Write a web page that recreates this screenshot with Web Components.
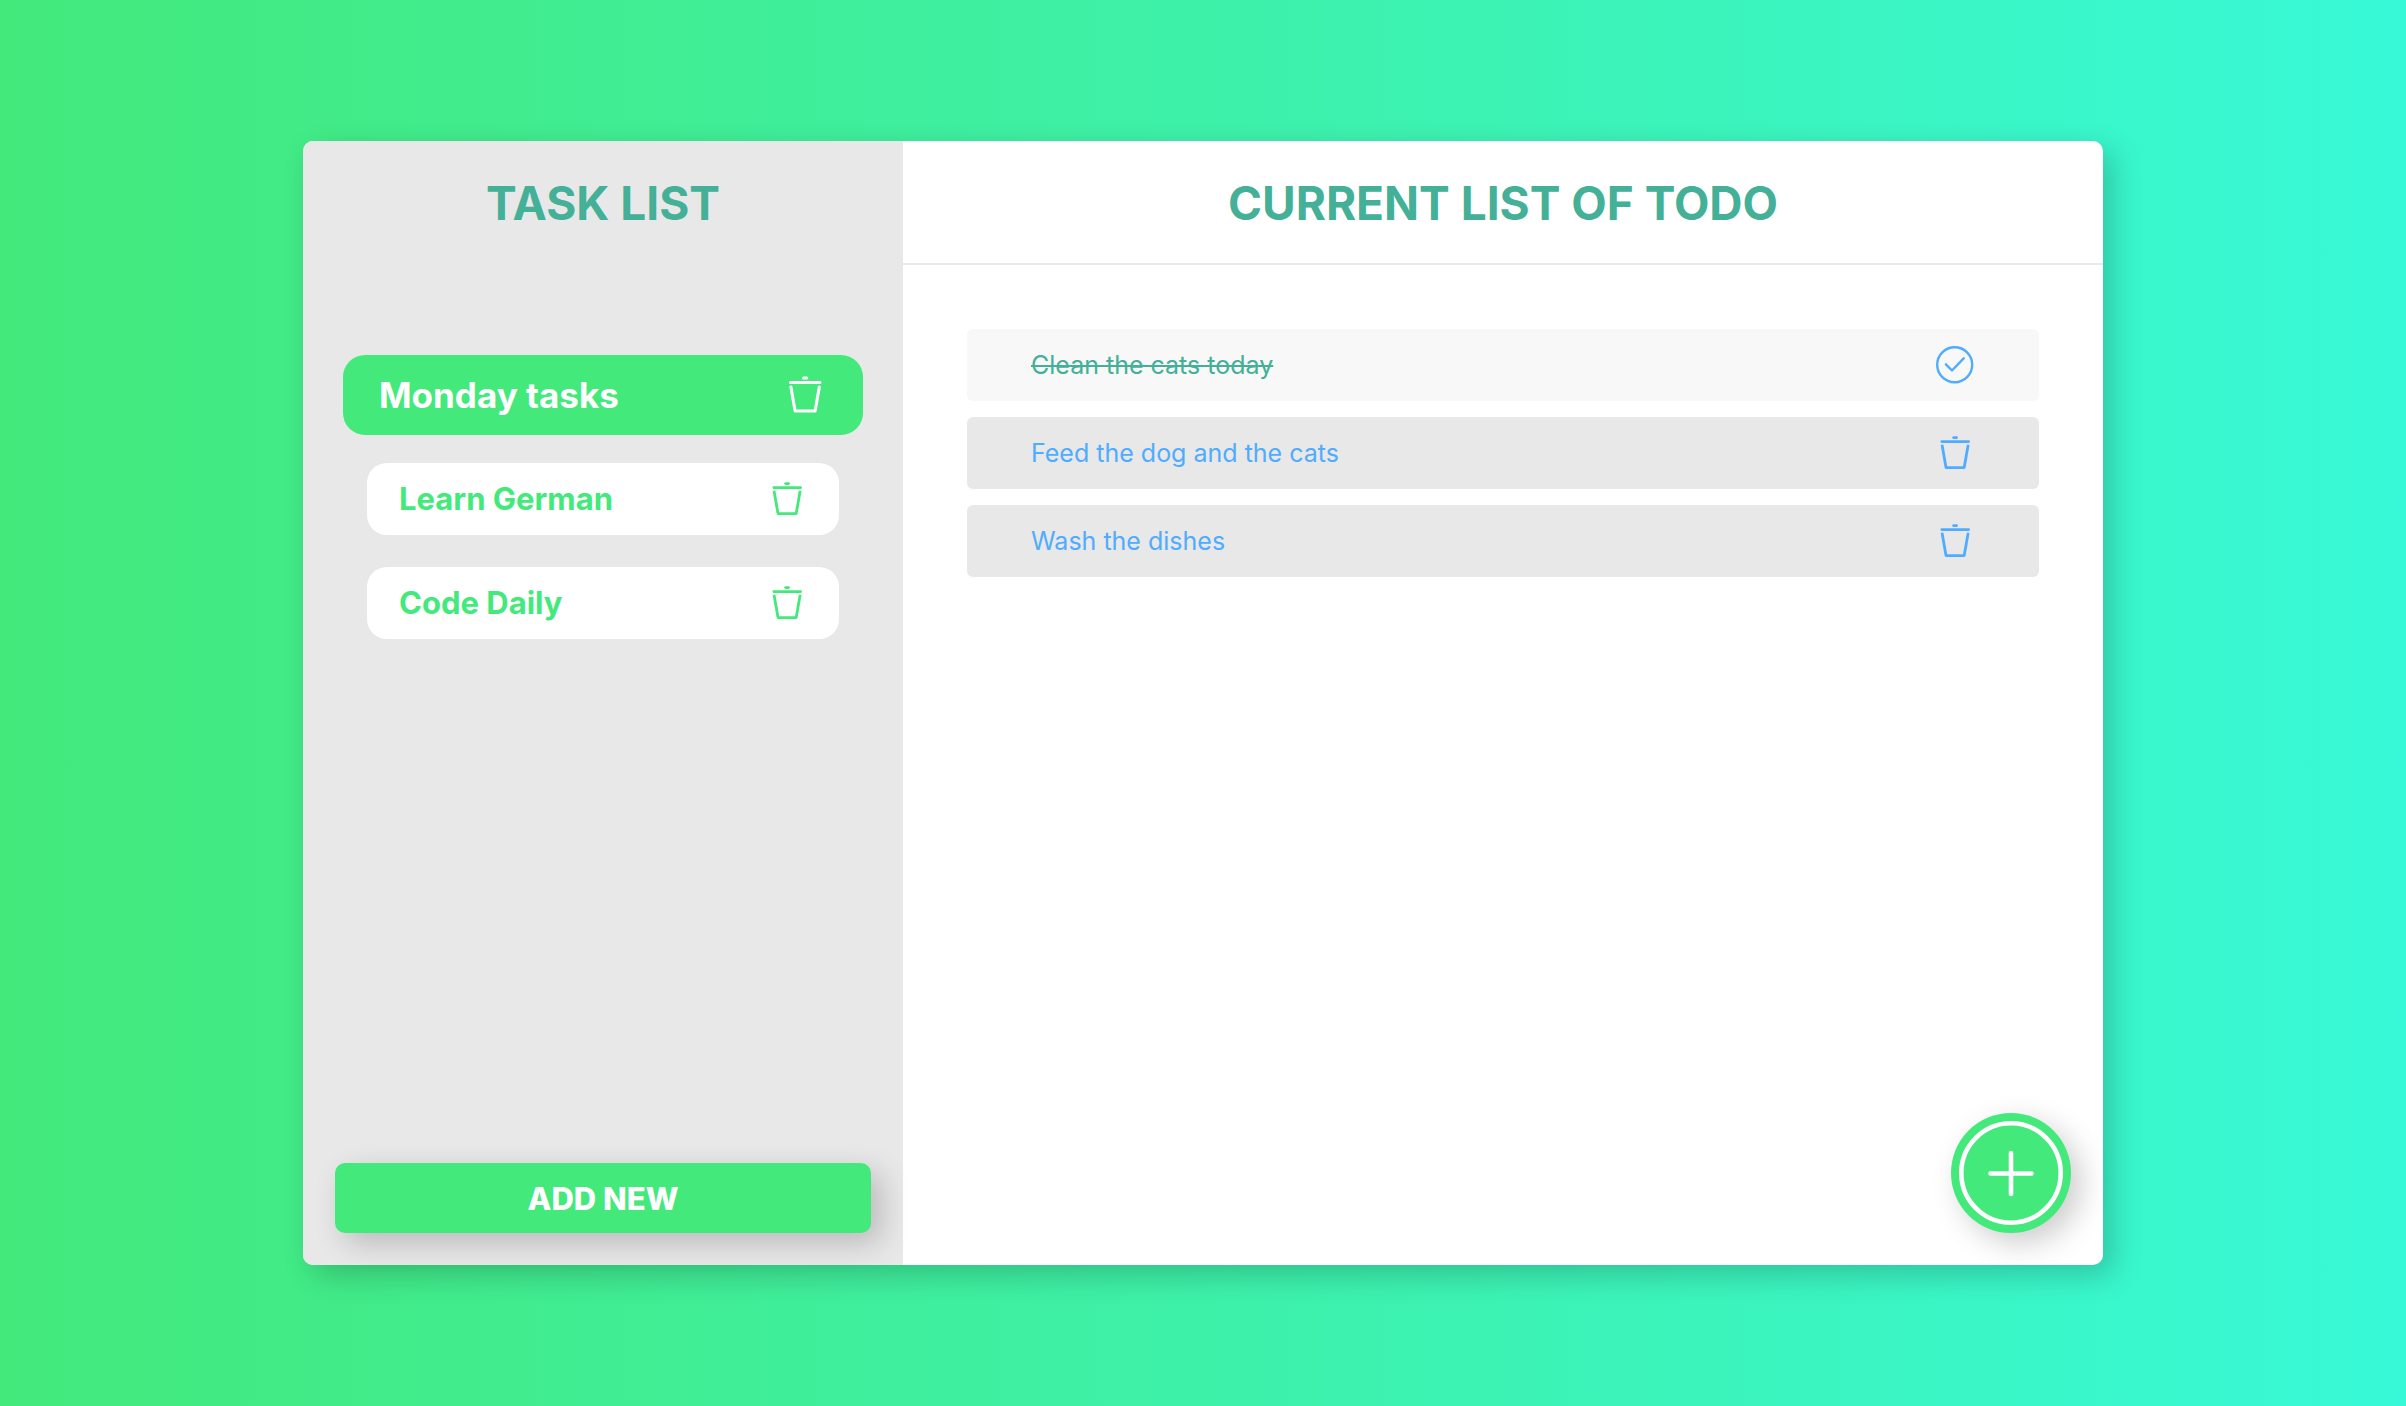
<!DOCTYPE html>
<html lang="en">
<head>
<meta charset="utf-8">
<meta name="viewport" content="width=device-width, initial-scale=1">
<title>Todo</title>
<style>
  :root {
    --green: #43e97b;
    --teal: #43b097;
    --blue: #4facfe;
    --grey: #e8e8e8;
    --pale: #f8f8f8;
    --shadow: 10px 10px 30px rgba(0, 0, 0, .2);
  }
  body { margin: 0; font-family: Inter, "Liberation Sans", sans-serif; }
</style>
</head>
<body>
<todo-app>
  <task-sidebar slot="sidebar" heading="TASK LIST">
    <task-tab active>Monday tasks</task-tab>
    <task-tab>Learn German</task-tab>
    <task-tab>Code Daily</task-tab>
  </task-sidebar>
  <todo-panel heading="CURRENT LIST OF TODO">
    <todo-row done>Clean the cats today</todo-row>
    <todo-row>Feed the dog and the cats</todo-row>
    <todo-row>Wash the dishes</todo-row>
  </todo-panel>
</todo-app>

<script>
  const define = (name, render) => customElements.define(name, class extends HTMLElement {
    constructor() { super(); this.attachShadow({ mode: 'open' }); }
    connectedCallback() {
      this.shadowRoot.innerHTML = '<style>*{box-sizing:border-box}button{font:inherit;color:inherit;background:none;border:0;padding:0;margin:0;cursor:pointer}</style>' + render(this);
    }
  });

  const icons = {
    trash: '<g stroke-width="2.8"><path d="M18.6 4.6h3M6.8 8.6h26.8M7.2 12.8l3.8 21.8h18.2l3.8-21.8"/></g>',
    check: '<circle cx="19.7" cy="19.7" r="17.5"/><path d="M10.9 19.3l6.1 6.2 11.7-12.2"/>'
  };

  define('line-icon', el => `
    <style>
      :host { display: block; flex: none; width: var(--icon-size, 40px); height: var(--icon-size, 40px); }
      svg { display: block; width: 100%; height: 100%; fill: none; stroke: currentColor; stroke-width: 2.4; stroke-linecap: round; stroke-linejoin: round; }
    </style>
    <svg viewBox="0 0 40 40" aria-hidden="true">${icons[el.getAttribute('name')]}</svg>`);

  define('todo-app', () => `
    <style>
      :host { display: flex; align-items: center; justify-content: center; min-height: 100vh; background: linear-gradient(to right, #43e97b 0%, #38f9d7 100%); }
      main { display: grid; grid-template-columns: 1fr 2fr; width: 80%; max-width: 1800px; min-height: 80vh; background: #fff; border-radius: 10px; box-shadow: var(--shadow); }
    </style>
    <main><slot name="sidebar"></slot><slot></slot></main>`);

  define('task-sidebar', el => `
    <style>
      :host { display: flex; flex-direction: column; background: var(--grey); border-radius: 10px 0 0 10px; }
      h1 { margin: 0; padding: 33px 32px 31px; font-size: 46px; line-height: 58px; text-align: center; color: var(--teal); }
      nav { flex: 1; display: flex; flex-direction: column; gap: 32px; padding: 96px 64px 32px; }
      .add { height: 70px; margin: 0 32px 32px; border-radius: 10px; background: var(--green); color: #fff; font-size: 31px; font-weight: 800; box-shadow: var(--shadow); }
    </style>
    <h1>${el.getAttribute('heading')}</h1>
    <nav><slot></slot></nav>
    <button class="add" type="button">ADD NEW</button>`);

  define('task-tab', () => `
    <style>
      :host { display: flex; align-items: center; justify-content: space-between; min-height: 72px; padding: 0 32px; border-radius: 20px; background: #fff; color: var(--green); font-size: 31px; font-weight: 700; }
      :host([active]) { margin: -4px -24px; min-height: 80px; padding: 0 36px; border-radius: 22px; background: var(--green); color: #fff; font-size: 35px; --icon-size: 44px; }
    </style>
    <button type="button"><slot></slot></button>
    <button type="button" aria-label="Delete list"><line-icon name="trash"></line-icon></button>`);

  define('todo-panel', el => `
    <style>
      :host { display: flex; flex-direction: column; }
      h2 { margin: 0; padding: 33px 32px 31px; font-size: 46px; line-height: 58px; text-align: center; color: var(--teal); border-bottom: 2px solid var(--grey); }
      section { flex: 1; display: flex; flex-direction: column; gap: 16px; padding: 64px; }
      .fab { align-self: flex-end; width: 120px; height: 120px; margin: 0 32px 32px; border-radius: 50%; background: var(--green); box-shadow: var(--shadow); }
      svg { display: block; width: 100%; height: 100%; fill: none; stroke: #fff; stroke-width: 4.6; stroke-linecap: round; }
    </style>
    <h2>${el.getAttribute('heading')}</h2>
    <section><slot></slot></section>
    <button class="fab" type="button" aria-label="Add todo"><svg viewBox="0 0 120 120"><circle cx="60" cy="60" r="49.7"/><path d="M60 40v41M39.5 60.5h41"/></svg></button>`);

  define('todo-row', el => `
    <style>
      :host { display: flex; align-items: center; justify-content: space-between; min-height: 72px; padding: 0 64px; border-radius: 6px; background: var(--grey); color: var(--blue); font-size: 25px; }
      :host([done]) { background: var(--pale); }
      :host([done]) span { color: var(--teal); text-decoration: line-through; text-decoration-thickness: 2px; }
    </style>
    <span><slot></slot></span>
    <button type="button" aria-label="${el.hasAttribute('done') ? 'Completed' : 'Delete todo'}"><line-icon name="${el.hasAttribute('done') ? 'check' : 'trash'}"></line-icon></button>`);
</script>
</body>
</html>
